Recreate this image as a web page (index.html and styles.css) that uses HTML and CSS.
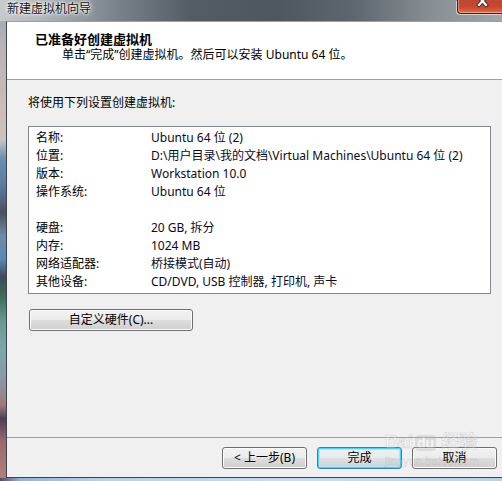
FILE: index.html
```html
<!DOCTYPE html>
<html lang="zh-CN">
<head>
<meta charset="utf-8">
<title>新建虚拟机向导</title>
<link rel="stylesheet" href="styles.css">
</head>
<body>
<div class="window">
  <div class="titlebar">
    <span class="title-text">新建虚拟机向导</span>
    <div class="close-btn">
      <svg width="45" height="14" viewBox="0 0 45 14"><path d="M21 -3 L28 5 M28 -3 L21 5" stroke="#3a2a2a" stroke-width="4" stroke-linecap="square"/><path d="M21 -3 L28 5 M28 -3 L21 5" stroke="#ffffff" stroke-width="2.2" stroke-linecap="square"/></svg>
    </div>
  </div>
  <div class="frame-row">
    <div class="side-frame"></div>
    <div class="client">
      <div class="header">
        <div class="header-title">已准备好创建虚拟机</div>
        <div class="header-sub">单击“完成”创建虚拟机。然后可以安装 Ubuntu 64 位。</div>
      </div>
      <div class="body">
        <div class="intro">将使用下列设置创建虚拟机:</div>
        <div class="summary">
          <div class="row"><span class="k">名称:</span><span class="v">Ubuntu 64 位 (2)</span></div>
          <div class="row"><span class="k">位置:</span><span class="v">D:\用户目录\我的文档\Virtual Machines\Ubuntu 64 位 (2)</span></div>
          <div class="row"><span class="k">版本:</span><span class="v">Workstation 10.0</span></div>
          <div class="row"><span class="k">操作系统:</span><span class="v">Ubuntu 64 位</span></div>
          <div class="row"></div>
          <div class="row"><span class="k">硬盘:</span><span class="v">20 GB, 拆分</span></div>
          <div class="row"><span class="k">内存:</span><span class="v">1024 MB</span></div>
          <div class="row"><span class="k">网络适配器:</span><span class="v">桥接模式(自动)</span></div>
          <div class="row"><span class="k">其他设备:</span><span class="v">CD/DVD, USB 控制器, 打印机, 声卡</span></div>
        </div>
        <button class="btn btn-custom">自定义硬件(C)...</button>
      </div>
      <div class="footer">
        <button class="btn btn-nav">&lt; 上一步(B)</button>
        <button class="btn btn-nav btn-default">完成</button>
        <button class="btn btn-nav">取消</button>
      </div>
      <div class="watermark">
        <span class="wm-brand">Bai<span class="wm-paw">du</span> 经验</span>
        <span class="wm-url">jingyan.baidu.com</span>
      </div>
    </div>
  </div>
  <div class="bottom-frame"></div>
</div>
</body>
</html>
```
FILE: styles.css
```css
* { box-sizing: border-box; }
html, body { margin: 0; padding: 0; }
body {
  width: 502px;
  height: 481px;
  overflow: hidden;
  font-family: "Noto Sans", "Noto Sans CJK SC", sans-serif;
  font-size: 12px;
  color: #000;
}
.window {
  width: 502px;
  height: 481px;
  display: flex;
  flex-direction: column;
  background: #8a949c;
}
.titlebar {
  height: 21px;
  flex: none;
  display: flex;
  align-items: flex-start;
  background: linear-gradient(90deg, #c6cacd 0%, #a9b0b5 10%, #7d868d 22%, #535c63 38%, #4f575e 55%, #5d666d 70%, #858d93 85%, #a1a8ad 100%);
}
.title-text {
  margin-left: 7px;
  line-height: 15px;
  font-family: "Noto Sans CJK SC", sans-serif;
  font-size: 12px;
  color: #111;
  text-shadow: 0 0 6px #fff, 0 0 3px #fff, 0 0 2px #fff;
}
.close-btn {
  margin-left: auto;
  width: 45px;
  height: 14px;
  border: 1px solid #3b2420;
  border-top: none;
  border-right: none;
  border-bottom-left-radius: 4px;
  background: linear-gradient(#b84a36 0%, #c7452b 45%, #d45a3a 80%, #e27e5c 100%);
  box-shadow: -1px 1px 0 rgba(255,255,255,0.55), inset 1px -1px 0 rgba(255,200,180,0.5);
  overflow: hidden;
}
.close-btn svg { display: block; }
.frame-row {
  flex: 1;
  display: flex;
  min-height: 0;
}
.side-frame {
  width: 6px;
  flex: none;
  background: linear-gradient(180deg, #a7adb3 0%, #b7b3b6 5%, #cdbcb4 20%, #c8c4c2 26%, #6a8fb0 30%, #5a7b9c 36%, #4c5060 42%, #6f8aa8 47%, #5c88b4 52%, #3e4a5c 56%, #3c6a58 60%, #6a9a94 66%, #7da6a8 72%, #8a9aa8 78%, #a07a7c 84%, #4d3e58 87%, #9a6a6e 92%, #b27e7a 100%);
}
.bottom-frame {
  height: 3px;
  flex: none;
  background: linear-gradient(90deg, #5a4a5e 0%, #8fb4d8 4%, #b3d2ee 20%, #c4dcf2 60%, #b6d3ee 100%);
}
.client {
  flex: 1;
  position: relative;
  display: flex;
  flex-direction: column;
  border-top: 1px solid #99a1a7;
  border-left: 1px solid #3e444c;
  border-bottom: 1px solid #3e444c;
  background: #f0f0f0;
  overflow: hidden;
}
.header {
  height: 58px;
  flex: none;
  background: #fff;
  border-bottom: 1px solid #a0a0a0;
  padding-top: 8px;
}
.header-title {
  margin-left: 28px;
  font-family: "Noto Sans CJK SC", sans-serif;
  font-weight: bold;
  font-size: 13px;
  line-height: 17px;
}
.header-sub {
  margin-left: 55px;
  line-height: 16px;
}
.body {
  flex: 1;
  padding: 15px 11px 0 21px;
}
.intro {
  line-height: 16px;
}
.summary {
  margin-top: 15px;
  background: #fff;
  border: 1px solid #828790;
  padding: 2px 0 2px 7px;
}
.row {
  display: flex;
  height: 18px;
  line-height: 18px;
  white-space: nowrap;
}
.k { width: 115px; flex: none; }
.v { color: #0a0a1a; }
.btn {
  font-family: "Noto Sans", "Noto Sans CJK SC", sans-serif;
  font-size: 12px;
  color: #000;
  height: 22px;
  padding: 0;
  line-height: 18px;
  border: 1px solid #707070;
  border-radius: 3px;
  background: linear-gradient(#f2f2f2 0%, #ebebeb 48%, #dddddd 52%, #cfcfcf 100%);
  box-shadow: inset 0 0 0 1px #fbfbfb;
}
.btn-custom {
  display: block;
  margin-top: 15px;
  margin-left: 1px;
  width: 164px;
}
.footer {
  height: 40px;
  flex: none;
  border-top: 1px solid #a0a0a0;
  display: flex;
  justify-content: flex-end;
  align-items: flex-start;
  gap: 10px;
  padding: 9px 5px 0 0;
}
.btn-nav { width: 85px; }
.btn-default {
  border-color: #3c7fb1;
  box-shadow: inset 0 0 0 1px #48d3fb, inset 0 0 0 2px #b0e6fa;
  background: linear-gradient(#f0f0f0 0%, #e8ebed 48%, #dadfe2 52%, #cdd3d7 100%);
}
.watermark {
  position: absolute;
  left: 378px;
  top: 410px;
  display: flex;
  flex-direction: column;
  align-items: flex-start;
  pointer-events: none;
  opacity: 0.3;
}
.wm-brand {
  font-family: "Liberation Sans", "Noto Sans CJK SC", sans-serif;
  font-size: 18px;
  font-weight: bold;
  line-height: 20px;
  color: #fff;
  -webkit-text-stroke: 0.6px #8a8a8a;
}
.wm-paw {
  display: inline-block;
  margin-left: 2px;
  padding: 0 2px;
  border-radius: 4px;
  background: #b0b0b0;
  color: #fff;
  font-size: 14px;
  line-height: 16px;
  -webkit-text-stroke: 0;
}
.wm-url {
  margin-top: 3px;
  font-family: "Liberation Sans", sans-serif;
  font-size: 11px;
  line-height: 12px;
  color: #fff;
  -webkit-text-stroke: 0.4px #8a8a8a;
  letter-spacing: 0.3px;
}
```
